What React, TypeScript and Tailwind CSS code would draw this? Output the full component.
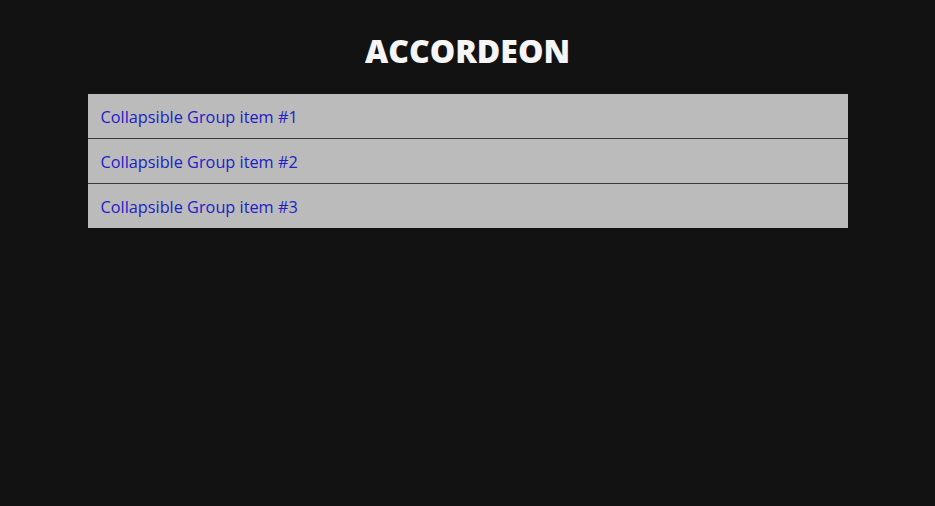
import React from 'react';

const items = ['Collapsible Group item #1', 'Collapsible Group item #2', 'Collapsible Group item #3'];

export default function App() {
  return (
    <div className="min-h-screen bg-[#121212] font-['Open_Sans',sans-serif]">
      <h1 className="pt-[27px] text-center text-[32px] font-extrabold leading-[48px] text-[#f5f5f5]">ACCORDEON</h1>
      <div className="mx-auto mt-[19px] w-[760px] bg-[#bbbbbb]">
        {items.map((label, i) => (
          <div
            key={label}
            className={`flex items-center px-[13px] pt-[2px] text-[16.3px] text-[#2020c8] ${i > 0 ? 'h-[45px] border-t border-[#3a3a3a]' : 'h-[44px]'}`}
          >
            {label}
          </div>
        ))}
      </div>
    </div>
  );
}
